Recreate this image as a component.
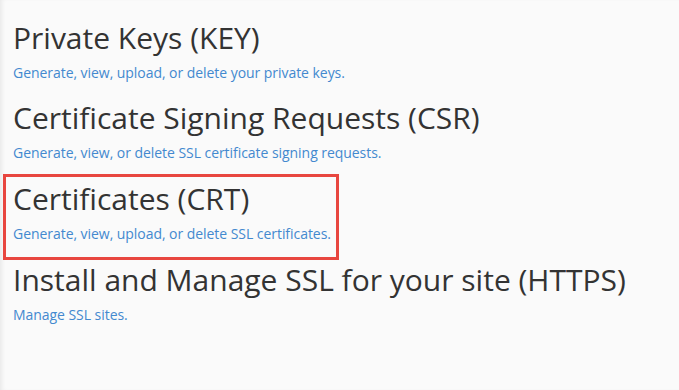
import React from "react";

const sections = [
  {
    title: "Private Keys (KEY)",
    desc: "Generate, view, upload, or delete your private keys.",
  },
  {
    title: "Certificate Signing Requests (CSR)",
    desc: "Generate, view, or delete SSL certificate signing requests.",
  },
  {
    title: "Certificates (CRT)",
    desc: "Generate, view, upload, or delete SSL certificates.",
    highlight: true,
  },
  {
    title: "Install and Manage SSL for your site (HTTPS)",
    desc: "Manage SSL sites.",
  },
];

const Section = ({ title, desc }) => (
  <div>
    <h2 className="text-[30px] leading-[33px] text-[#333333] font-normal">
      {title}
    </h2>
    <a href="#" className="block mt-[9px] text-[14px] leading-[19px] tracking-[-0.05px] text-[#4389cf]">
      {desc}
    </a>
  </div>
);

export default function App() {
  return (
    <div
      className="w-[679px] h-[390px] bg-[#fafafa] overflow-hidden shadow-[inset_4px_0_4px_-2px_rgba(0,0,0,0.07)] pt-[21px]"
      style={{ fontFamily: '"Open Sans", "Liberation Sans", sans-serif' }}
    >
      {sections.map((s, i) =>
        s.highlight ? (
          <div
            key={i}
            className="mt-[12px] ml-[3px] w-[336px] border-[3px] border-[#e8463f] pl-[7px] pt-[5px] pb-[14px]"
          >
            <Section {...s} />
          </div>
        ) : (
          <div key={i} className={`pl-[13px] ${i === 0 ? "" : i === 3 ? "mt-[3px]" : "mt-[19px]"}`}>
            <Section {...s} />
          </div>
        )
      )}
    </div>
  );
}
